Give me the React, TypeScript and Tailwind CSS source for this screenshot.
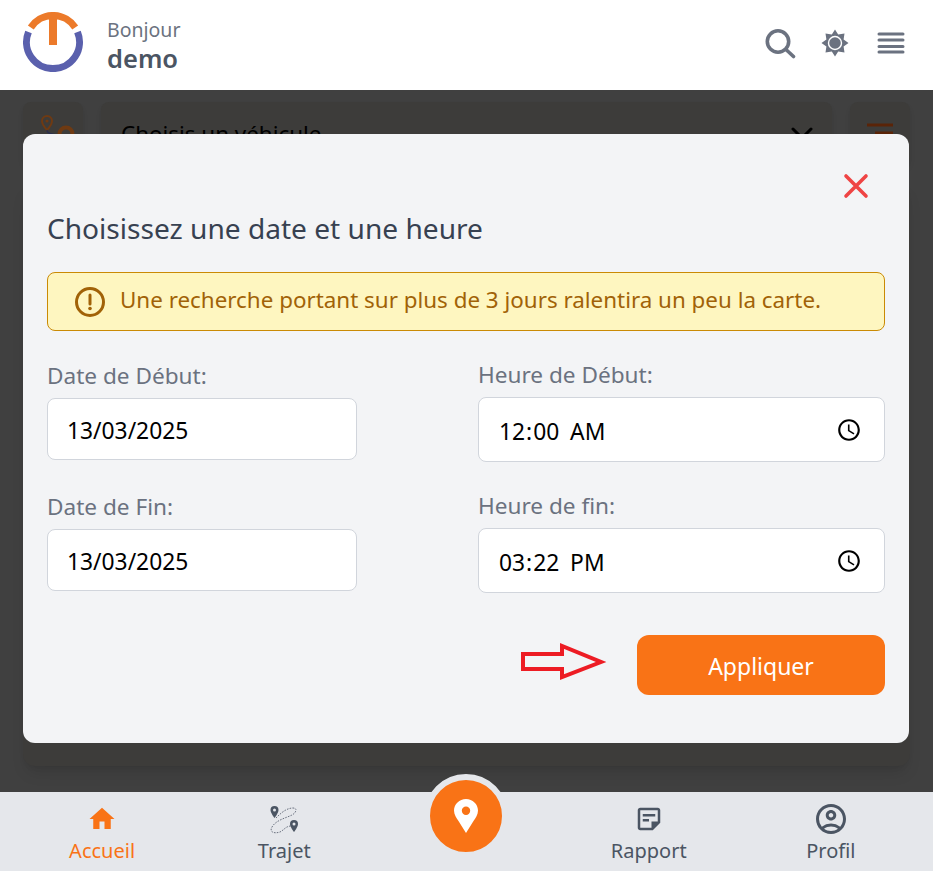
import { MdHome, MdOutlineAccountCircle, MdOutlineStickyNote2 } from 'react-icons/md';

const FONT = "font-['Noto_Sans','Open_Sans',sans-serif]";

function Logo() {
  return (
    <svg width="60" height="60" viewBox="0 0 60 60" fill="none" className="mb-[6px] shrink-0">
      <path d="M5.500 20 A26.500 26.500 0 1 0 54.500 20" stroke="#5a60ad" strokeWidth="7" />
      <path d="M7.800 15.500 A26.500 26.500 0 0 1 52.200 15.500" stroke="#ec7a2a" strokeWidth="7" />
      <rect x="26" y="3" width="8" height="30" fill="#ec7a2a" />
    </svg>
  );
}

function SearchIcon() {
  return (
    <svg width="32" height="32" viewBox="0 0 32 32" fill="none" stroke="#6b7280" strokeLinecap="round">
      <circle cx="13" cy="14.500" r="10.700" strokeWidth="3.600" />
      <path d="M21.500 23 L28.500 29.500" strokeWidth="3.600" />
    </svg>
  );
}

function SunIcon() {
  return (
    <svg width="28" height="28" viewBox="0 0 28 28">
      <path
        fill="#6b7280"
        d="M14 0.500 L17.200 5.400 L23.500 4.500 L22.600 10.600 L27.500 14 L22.600 17.400 L23.500 23.500 L17.200 22.600 L14 27.500 L10.800 22.600 L4.500 23.500 L5.400 17.400 L0.500 14 L5.400 10.600 L4.500 4.500 L10.800 5.400 Z"
      />
      <circle cx="14" cy="14" r="6.500" fill="#6b7280" stroke="#fff" strokeWidth="1.400" />
    </svg>
  );
}

function MenuIcon() {
  return (
    <svg width="28" height="22" viewBox="0 0 28 22" stroke="#6b7280" strokeWidth="3" strokeLinecap="round">
      <path d="M2 2 H26 M2 8 H26 M2 14.500 H26 M2 20 H26" />
    </svg>
  );
}

function RouteIcon() {
  return (
    <svg width="36" height="38" viewBox="0 0 36 38" fill="none" className="ml-[8px]">
      <path d="M8 1 a5 5 0 0 1 5 5 c0 3.500-5 9-5 9 s-5-5.500-5-9 A5 5 0 0 1 8 1z" stroke="#6f3a12" strokeWidth="2" />
      <circle cx="8" cy="6" r="1.600" fill="#6f3a12" />
      <path d="M8 15 c0 6 9 2 9 7" stroke="#2a2f4f" strokeWidth="1.500" />
      <circle cx="27" cy="19" r="6.500" stroke="#6f3a12" strokeWidth="4" />
    </svg>
  );
}

function TripIcon() {
  return (
    <svg width="32" height="32" viewBox="0 0 32 32" fill="none" className="mt-[4px]">
      <path
        d="M8 13 C12 9 18 3 25 3 C30 3 28 8 24 10 C18 13 8 15 4 22 C1 27 6 29 12 27 C16 25 18 21 23 21"
        stroke="#6b7280"
        strokeWidth="1"
        strokeDasharray="1.600 1.200"
      />
      <path d="M6.500 1 a4 4 0 0 1 4 4 c0 3-4 8-4 8 s-4-5-4-8 A4 4 0 0 1 6.500 1z" fill="#4b5563" />
      <circle cx="6.500" cy="5" r="1.500" fill="#e5e7eb" />
      <path d="M26 15 a4 4 0 0 1 4 4 c0 3-4 8-4 8 s-4-5-4-8 A4 4 0 0 1 26 15z" fill="#4b5563" />
      <circle cx="26" cy="19" r="1.500" fill="#e5e7eb" />
    </svg>
  );
}

function PinIcon() {
  return (
    <svg width="24" height="34" viewBox="0 0 24 34">
      <path
        fillRule="evenodd"
        fill="#fff"
        d="M12 0 C18.600 0 24 5.200 24 11.600 C24 16 21.500 19 19.500 22 L12 34 L4.500 22 C2.500 19 0 16 0 11.600 C0 5.200 5.400 0 12 0 Z M12 7.500 a4.200 4.200 0 1 0 0 8.400 a4.200 4.200 0 1 0 0-8.400 Z"
      />
    </svg>
  );
}

function AlertIcon() {
  return (
    <svg width="30" height="30" viewBox="0 0 30 30" fill="none" className="shrink-0">
      <circle cx="15" cy="15" r="13.500" stroke="#a16207" strokeWidth="3" />
      <path d="M15 8 V17" stroke="#a16207" strokeWidth="3" strokeLinecap="round" />
      <circle cx="15" cy="21.500" r="1.800" fill="#a16207" />
    </svg>
  );
}

function Field({ label, type, value, tall }: { label: string; type: string; value: string; tall?: boolean }) {
  return (
    <div className="flex flex-col">
      <label className="text-[22.600px] leading-[28px] text-[#6b7280]">{label}</label>
      <input
        type={type}
        defaultValue={value}
        className={`mt-[8px] w-full rounded-lg border border-gray-300 bg-white px-[19px] text-[22.800px] text-black outline-none ${
          tall
            ? 'h-[65px] [&::-webkit-calendar-picker-indicator]:h-[26px] [&::-webkit-calendar-picker-indicator]:w-[26px] [&::-webkit-datetime-edit]:translate-y-[3px] [&::-webkit-datetime-edit-ampm-field]:ml-[5px]'
            : 'h-[62px] pt-[2px]'
        }`}
      />
    </div>
  );
}

const NAV_ITEMS = [
  { label: 'Accueil', active: true, icon: <MdHome size={30} /> },
  { label: 'Trajet', icon: <TripIcon /> },
  { label: 'Rapport', icon: <MdOutlineStickyNote2 size={30} /> },
  { label: 'Profil', icon: <MdOutlineAccountCircle size={36} /> },
];

function NavItem({ item }: { item: (typeof NAV_ITEMS)[number] }) {
  return (
    <div className={`flex flex-col items-center ${item.active ? 'text-[#f97316]' : 'text-[#4b5563]'}`}>
      <div className="flex h-[36px] items-center justify-center">{item.icon}</div>
      <span className="text-[20px] leading-[28px]">{item.label}</span>
    </div>
  );
}

export default function App() {
  return (
    <div className={`flex h-[871px] w-[933px] flex-col overflow-hidden bg-[#404040] ${FONT}`}>
      {/* Header */}
      <header className="flex h-[90px] shrink-0 items-center justify-between bg-white pl-[23px] pr-[28px]">
        <div className="flex items-center gap-[24px]">
          <Logo />
          <div className="flex flex-col">
            <span className="text-[19.500px] leading-[28px] text-[#6b7280]">Bonjour</span>
            <span className="-mt-[2px] text-[25.500px] font-semibold leading-[32px] text-[#4b5563]">demo</span>
          </div>
        </div>
        <div className="mb-[5px] flex items-center gap-[24px]">
          <SearchIcon />
          <SunIcon />
          <div className="ml-[4px]">
            <MenuIcon />
          </div>
        </div>
      </header>

      {/* Main */}
      <main className="relative flex min-h-0 flex-1 flex-col gap-[16px] px-[23px] pb-[26px] pt-[12px]">
        <div className="flex h-[64px] gap-[18px]">
          <div className="flex w-[60px] items-center justify-center rounded-lg bg-[#3d3c3a] shadow-md">
            <RouteIcon />
          </div>
          <div className="flex flex-1 items-center justify-between rounded-lg bg-[#3d3c3a] pl-[20px] pr-[18px] text-[22.400px] text-black shadow-md">
            <span>Choisis un véhicule</span>
            <svg width="24" height="14" viewBox="0 0 24 14" fill="none" stroke="#000" strokeWidth="3" strokeLinecap="round">
              <path d="M3 2 L12 11 L21 2" />
            </svg>
          </div>
          <div className="flex w-[60px] items-center justify-center rounded-lg bg-[#3d3c3a] shadow-md">
            <svg width="28" height="24" viewBox="0 0 28 24" fill="none" stroke="#5a2408" strokeWidth="3">
              <path d="M1 3 H27 M9 11 H27 M16 19 H27" />
            </svg>
          </div>
        </div>
        <div className="flex-1 rounded-xl bg-[#3d3c3a] shadow-lg" />

        {/* Modal */}
        <div className="absolute left-[23px] top-[44px] flex h-[609px] w-[886px] flex-col rounded-xl bg-[#f3f4f6] px-[24px]">
          <div className="flex justify-end pr-[14px] pt-[37px]">
            <svg width="30" height="30" viewBox="0 0 30 30" stroke="#ef4444" strokeWidth="3.600" strokeLinecap="round">
              <path d="M5 5 L25 25 M25 5 L5 25" />
            </svg>
          </div>
          <h2 className="mt-[9px] text-[28.100px] leading-[36px] text-[#374151]">Choisissez une date et une heure</h2>
          <div className="mt-[26px] flex h-[59px] items-center gap-[15px] rounded-lg border border-[#ca8a04] bg-[#fef6c0] px-[27px]">
            <AlertIcon />
            <span className="whitespace-nowrap pb-[3px] text-[22.400px] text-[#a16207]">
              Une recherche portant sur plus de 3 jours ralentira un peu la carte.
            </span>
          </div>
          <div className="mt-[30px] flex justify-between">
            <div className="flex w-[310px] flex-col gap-[33px] pt-[1px]">
              <Field label="Date de Début:" type="text" value="13/03/2025" />
              <Field label="Date de Fin:" type="text" value="13/03/2025" />
            </div>
            <div className="flex w-[407px] flex-col gap-[30px]">
              <Field label="Heure de Début:" type="time" value="00:00" tall />
              <Field label="Heure de fin:" type="time" value="15:22" tall />
            </div>
          </div>
          <div className="mt-[42px] flex items-start justify-end gap-[27px]">
            <svg width="90" height="38" viewBox="0 0 90 38" fill="none" className="mt-[7px]">
              <path d="M3 12 H42 V4 L81 20 L42 35 V27 H3 Z" stroke="#ed1c24" strokeWidth="4" />
            </svg>
            <button className="h-[60px] w-[248px] rounded-xl bg-[#f97316] pt-[2px] text-[23px] text-white">Appliquer</button>
          </div>
        </div>
      </main>

      {/* Bottom nav */}
      <nav className="relative grid h-[79px] shrink-0 grid-cols-5 bg-gray-200 px-[11px] pt-[9px]">
        <NavItem item={NAV_ITEMS[0]} />
        <NavItem item={NAV_ITEMS[1]} />
        <div />
        <NavItem item={NAV_ITEMS[2]} />
        <NavItem item={NAV_ITEMS[3]} />
        <div className="absolute left-[424px] top-[-18px] flex h-[84px] w-[84px] items-center justify-center rounded-full border-[6px] border-gray-200 bg-[#f97316]">
          <PinIcon />
        </div>
      </nav>
    </div>
  );
}
